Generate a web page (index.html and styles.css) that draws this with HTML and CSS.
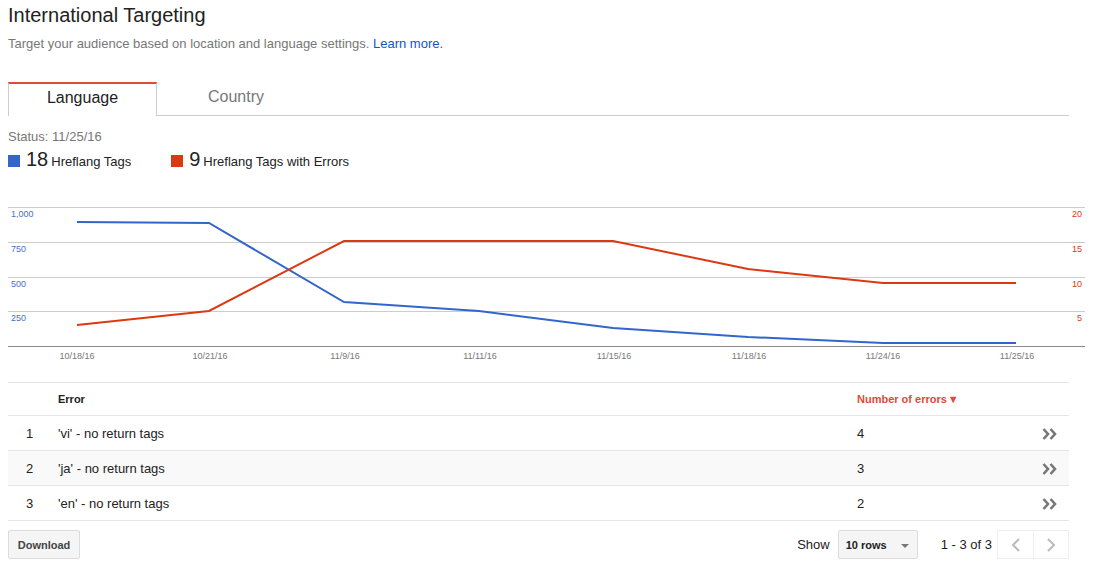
FILE: index.html
```html
<!DOCTYPE html>
<html>
<head>
<meta charset="utf-8">
<link rel="stylesheet" href="styles.css">
</head>
<body>
<div class="page">
  <h1 class="title">International Targeting</h1>
  <p class="subtitle">Target your audience based on location and language settings. <a class="link">Learn more.</a></p>

  <div class="tabs">
    <div class="tab active">Language</div>
    <div class="tab">Country</div>
    <div class="tab-rest"></div>
  </div>

  <div class="status">Status: 11/25/16</div>
  <div class="legend">
    <div class="legend-item"><span class="swatch blue"></span><span class="num">18</span><span class="lbl">Hreflang Tags</span></div>
    <div class="legend-item"><span class="swatch red"></span><span class="num">9</span><span class="lbl">Hreflang Tags with Errors</span></div>
  </div>

  <svg class="chart" width="1077" height="165" viewBox="0 0 1077 165">
    <g stroke="#cccccc" stroke-width="1">
      <line x1="0" y1="7.5" x2="1077" y2="7.5"/>
      <line x1="0" y1="42.5" x2="1077" y2="42.5"/>
      <line x1="0" y1="77.5" x2="1077" y2="77.5"/>
      <line x1="0" y1="111.5" x2="1077" y2="111.5"/>
    </g>
    <line x1="0" y1="146.5" x2="1077" y2="146.5" stroke="#888888" stroke-width="1"/>
    <g class="yl">
      <text x="3" y="17">1,000</text>
      <text x="3" y="52">750</text>
      <text x="3" y="87">500</text>
      <text x="3" y="121">250</text>
    </g>
    <g class="yr" text-anchor="end">
      <text x="1074" y="17">20</text>
      <text x="1074" y="52">15</text>
      <text x="1074" y="87">10</text>
      <text x="1074" y="121">5</text>
    </g>
    <polyline fill="none" stroke="#3366cc" stroke-width="2" points="69,22 201,23 336,102 471,111 605,128 740,137 875,143 1008,143"/>
    <polyline fill="none" stroke="#dc3912" stroke-width="2" points="69,125 201,111 336,41 471,41 605,41 740,69 875,83 1008,83"/>
    <g class="xl" text-anchor="middle">
      <text x="69" y="159">10/18/16</text>
      <text x="202" y="159">10/21/16</text>
      <text x="337" y="159">11/9/16</text>
      <text x="472" y="159">11/11/16</text>
      <text x="606" y="159">11/15/16</text>
      <text x="741" y="159">11/18/16</text>
      <text x="875" y="159">11/24/16</text>
      <text x="1009" y="159">11/25/16</text>
    </g>
  </svg>

  <div class="table">
    <div class="row head">
      <div class="c-idx"></div>
      <div class="c-err">Error</div>
      <div class="c-num sorted">Number of errors<span class="tri">▼</span></div>
      <div class="c-go"></div>
    </div>
    <div class="row">
      <div class="c-idx">1</div>
      <div class="c-err">'vi' - no return tags</div>
      <div class="c-num">4</div>
      <div class="c-go"><svg class="dbl" width="15" height="12" viewBox="0 0 15 12"><path d="M1.5 1 L6 6 L1.5 11 M8.5 1 L13 6 L8.5 11" fill="none" stroke="#777777" stroke-width="2.6"/></svg></div>
    </div>
    <div class="row alt">
      <div class="c-idx">2</div>
      <div class="c-err">'ja' - no return tags</div>
      <div class="c-num">3</div>
      <div class="c-go"><svg class="dbl" width="15" height="12" viewBox="0 0 15 12"><path d="M1.5 1 L6 6 L1.5 11 M8.5 1 L13 6 L8.5 11" fill="none" stroke="#777777" stroke-width="2.6"/></svg></div>
    </div>
    <div class="row">
      <div class="c-idx">3</div>
      <div class="c-err">'en' - no return tags</div>
      <div class="c-num">2</div>
      <div class="c-go"><svg class="dbl" width="15" height="12" viewBox="0 0 15 12"><path d="M1.5 1 L6 6 L1.5 11 M8.5 1 L13 6 L8.5 11" fill="none" stroke="#777777" stroke-width="2.6"/></svg></div>
    </div>
  </div>

  <div class="footer">
    <button class="btn">Download</button>
    <div class="pager">
      <span class="show">Show</span>
      <div class="select">10 rows<span class="caret"></span></div>
      <span class="range">1 - 3 of 3</span>
      <div class="nav">
        <div class="nav-btn"><svg width="10" height="14" viewBox="0 0 10 14"><path d="M8 1 L2 7 L8 13" fill="none" stroke="#bbbbbb" stroke-width="2"/></svg></div>
        <div class="nav-btn"><svg width="10" height="14" viewBox="0 0 10 14"><path d="M2 1 L8 7 L2 13" fill="none" stroke="#bbbbbb" stroke-width="2"/></svg></div>
      </div>
    </div>
  </div>
</div>
</body>
</html>
```
FILE: styles.css
```css
* { box-sizing: border-box; }
html, body { margin: 0; padding: 0; background: #fff; }
body { font-family: "Liberation Sans", Arial, sans-serif; color: #222; }
.page { padding: 0 8px; width: 1094px; }

.title { font-size: 20px; font-weight: normal; margin: 0; padding-top: 3px; line-height: 24px; color: #222; }
.subtitle { font-size: 13px; color: #777; margin: 9px 0 0; line-height: 16px; }
.link { color: #1155cc; text-decoration: none; }

.tabs { display: flex; margin-top: 30px; width: 1061px; height: 34px; }
.tab { height: 34px; font-size: 16px; display: flex; align-items: center; justify-content: center; color: #777; border-bottom: 1px solid #cccccc; padding-bottom: 3px; }
.tab.active { width: 149px; color: #222; border-top: 2px solid #dd4b39; border-left: 1px solid #cccccc; border-right: 1px solid #cccccc; border-bottom: none; padding-bottom: 4px; }
.tab:nth-child(2) { width: 158px; }
.tab-rest { flex: 1; border-bottom: 1px solid #cccccc; }

.status { font-size: 13px; color: #777; margin-top: 13px; line-height: 16px; }
.legend { display: flex; margin-top: 4px; height: 22px; align-items: flex-end; }
.legend-item { display: flex; align-items: baseline; margin-right: 40px; }
.swatch { width: 12px; height: 12px; display: inline-block; margin-right: 6px; align-self: center; margin-top: 2px; }
.swatch.blue { background: #3366cc; }
.swatch.red { background: #dc3912; }
.num { font-size: 20px; margin-right: 3px; color: #222; }
.lbl { font-size: 13px; color: #222; }

.chart { display: block; margin-top: 29px; font-family: "Liberation Sans", Arial, sans-serif; }
.yl text { font-size: 9px; fill: #4a6fc4; }
.yr text { font-size: 9px; fill: #dc3912; }
.xl text { font-size: 9px; fill: #777; }

.table { width: 1061px; margin-top: 17px; border-top: 1px solid #e5e5e5; }
.row { display: flex; align-items: center; height: 35px; border-bottom: 1px solid #e5e5e5; font-size: 13px; color: #222; }
.row.head { height: 33px; font-size: 11px; font-weight: bold; }
.row.alt { background: #f9f9f9; }
.c-idx { width: 50px; padding-left: 18px; }
.c-err { width: 799px; }
.c-num { flex: 1; }
.sorted { color: #dd4b39; }
.tri { font-size: 11px; margin-left: 1px; }
.c-go { width: 27px; display: flex; align-items: center; }
.dbl { display: block; margin-top: 1px; }

.footer { display: flex; justify-content: space-between; align-items: center; width: 1061px; margin-top: 9px; }
.btn { height: 29px; width: 72px; background: #f5f5f5; border: 1px solid #dcdcdc; border-radius: 2px; font-family: "Liberation Sans", Arial, sans-serif; font-size: 11px; font-weight: bold; color: #444; padding: 0; }
.pager { display: flex; align-items: center; }
.show { font-size: 13px; color: #222; margin-right: 8px; }
.select { width: 80px; height: 29px; background: #f5f5f5; border: 1px solid #dcdcdc; border-radius: 2px; font-size: 11px; font-weight: bold; color: #222; display: flex; align-items: center; padding-left: 7px; position: relative; }
.caret { position: absolute; right: 8px; top: 13px; border-left: 4px solid transparent; border-right: 4px solid transparent; border-top: 4px solid #777; }
.range { font-size: 13px; color: #222; margin-left: 23px; margin-right: 5px; }
.nav { display: flex; border: 1px solid #eeeeee; height: 29px; }
.nav-btn { width: 35px; display: flex; align-items: center; justify-content: center; }
.nav-btn + .nav-btn { border-left: 1px solid #eeeeee; }
```
